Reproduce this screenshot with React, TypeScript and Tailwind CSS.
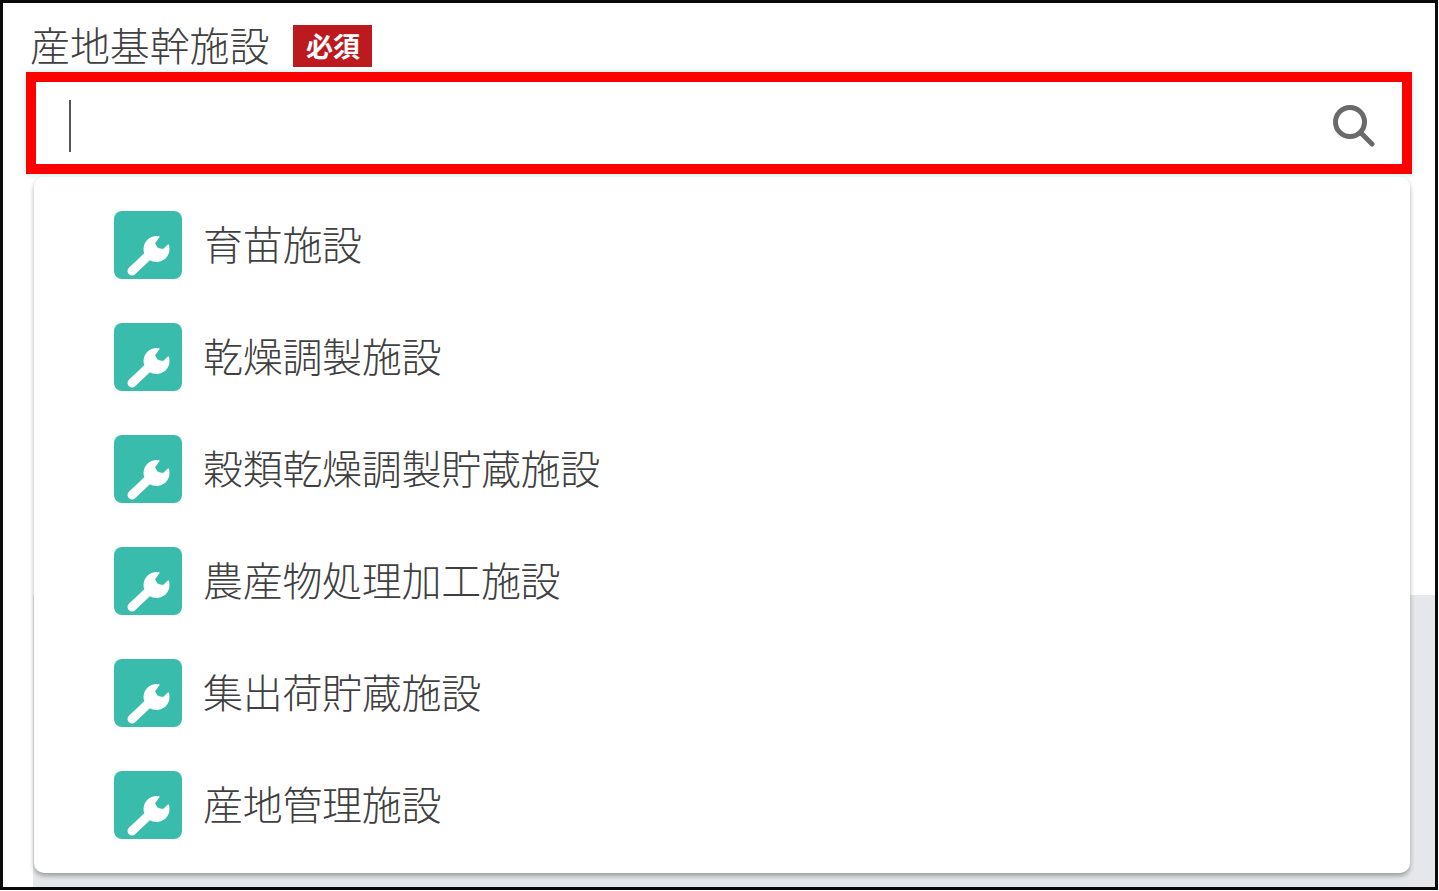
const facilities = [
  "育苗施設",
  "乾燥調製施設",
  "穀類乾燥調製貯蔵施設",
  "農産物処理加工施設",
  "集出荷貯蔵施設",
  "産地管理施設",
];

function WrenchBadge() {
  return (
    <div className="h-[68px] w-[68px] shrink-0 rounded-[8px] bg-[#3abcac]">
      <svg width="68" height="68" viewBox="0 0 68 68" fill="none">
        <path d="M18 60 L36 43" stroke="#fff" strokeWidth="9" strokeLinecap="round" />
        <path d="M46 25.5 A13 13 0 1 0 54.5 33 L49 38 L44 37 L41 32.5 Z" fill="#fff" />
      </svg>
    </div>
  );
}

function SearchIcon() {
  return (
    <svg width="42" height="42" viewBox="0 0 42 42" fill="none" stroke="#6a6a6a" strokeWidth="5">
      <circle cx="17" cy="17" r="14.5" />
      <path d="M27.5 27.5 L39 39" strokeLinecap="round" />
    </svg>
  );
}

export default function App() {
  return (
    <div
      className="h-[891px] w-[1439px] overflow-hidden bg-white"
      style={{ fontFamily: '"Noto Sans CJK JP", "Noto Sans", sans-serif' }}
    >
      <div className="flex h-[890px] w-[1438px] flex-col border-[3px] border-[#0a0a0a] bg-white">
        <div className="flex h-[69px] shrink-0 items-start pl-[27px] pt-[19px]">
          <span className="text-[40px] font-light leading-[44px] tracking-[-0.1px] text-[#404040]">産地基幹施設</span>
          <span className="ml-[24px] mt-[3px] flex h-[42px] w-[79px] items-center justify-center bg-[#bd1a1f] text-[27px] font-bold text-white">
            必須
          </span>
        </div>

        <div className="ml-[23px] flex h-[102px] w-[1386px] shrink-0 items-center justify-between border-[10px] border-[#ff0000] bg-white pl-[33px] pr-[27px] pt-[5px] shadow-[0_0_6px_rgba(58,188,172,0.35)]">
          <div className="h-[52px] w-[2px] bg-[#555555]" />
          <SearchIcon />
        </div>

        <div className="relative flex-1">
          <div className="ml-[30px] mt-[421px] h-[292px] bg-[#e5e7ea]" />
          <div className="absolute left-[31px] top-[3px] flex h-[696px] w-[1376px] flex-col rounded-[10px] bg-white pt-[34px] shadow-[0_3px_5px_rgba(0,0,0,0.32)]">
            {facilities.map((name) => (
              <div key={name} className="flex h-[112px] shrink-0 items-start pl-[80px]">
                <WrenchBadge />
                <span className="ml-[21px] text-[40px] font-light leading-[64px] tracking-[-0.3px] text-[#404040]">{name}</span>
              </div>
            ))}
          </div>
        </div>
      </div>
    </div>
  );
}
